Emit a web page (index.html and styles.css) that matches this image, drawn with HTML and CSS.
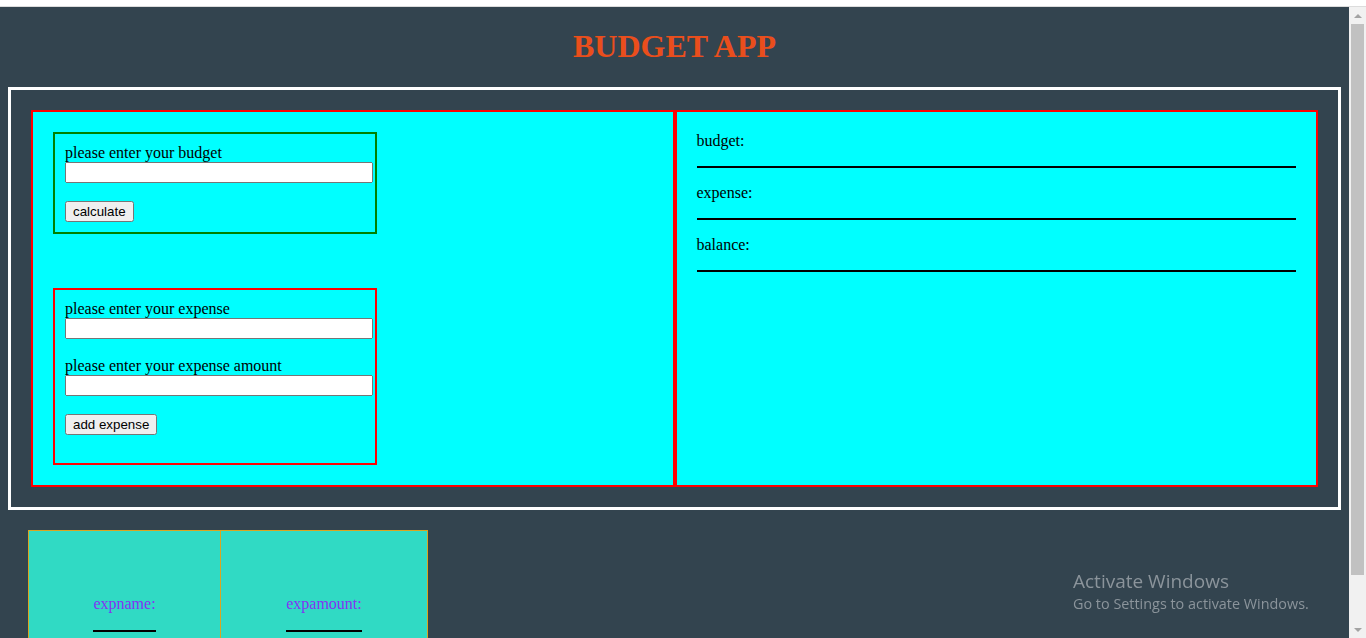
FILE: index.html
```html
<!DOCTYPE html>
<html lang="en">
<head>
<meta charset="utf-8">
<title>Budget App</title>
<link rel="stylesheet" href="styles.css">
</head>
<body>
<div class="topbar"></div>
<div class="window">
  <main class="page">
    <h1 class="title">BUDGET APP</h1>
    <section class="frame">
      <div class="panels">
        <div class="panel panel-forms">
          <form class="form form-budget">
            <label class="field-label">please enter your budget</label>
            <input class="field-input" type="text">
            <button type="button" class="btn">calculate</button>
          </form>
          <form class="form form-expense">
            <label class="field-label">please enter your expense</label>
            <input class="field-input" type="text">
            <label class="field-label">please enter your expense amount</label>
            <input class="field-input" type="text">
            <button type="button" class="btn">add expense</button>
          </form>
        </div>
        <div class="panel panel-summary">
          <div class="summary-item">budget:</div>
          <div class="summary-item">expense:</div>
          <div class="summary-item">balance:</div>
        </div>
      </div>
    </section>
    <section class="list">
      <div class="list-cell cell-name"><span class="list-head">expname:</span></div>
      <div class="list-cell cell-amount"><span class="list-head">expamount:</span></div>
    </section>
  </main>
  <div class="scrollbar">
    <div class="sb-arrow sb-up"><span class="tri-up"></span></div>
    <div class="sb-thumb"></div>
    <div class="sb-track"></div>
    <div class="sb-arrow sb-down"><span class="tri-down"></span></div>
  </div>
</div>
<div class="watermark">
  <div class="wm-title">Activate Windows</div>
  <div class="wm-sub">Go to Settings to activate Windows.</div>
</div>
</body>
</html>
```
FILE: styles.css
```css
html, body {
  margin: 0;
  padding: 0;
  height: 638px;
  overflow: hidden;
  background: #ffffff;
}
body {
  font-family: "Liberation Serif", "Times New Roman", serif;
  font-size: 16px;
  color: #000;
}
.topbar {
  height: 6px;
  background: #ffffff;
  border-bottom: 1px solid #dcdcdc;
}
.window {
  display: flex;
  height: 631px;
  overflow: hidden;
}
.page {
  flex: 1 1 auto;
  min-width: 0;
  background: #33444f;
  padding: 0 8px;
  overflow: hidden;
  display: flow-root;
}
.title {
  margin: 21.44px 0;
  font-size: 32px;
  font-weight: bold;
  text-align: center;
  color: #ea4e1c;
}
.frame {
  border: 3px solid #ffffff;
  padding: 20px;
}
.panels {
  display: flex;
}
.panel {
  flex: 1 1 0;
  border: 2px solid #ff0000;
  background: #00ffff;
  padding: 20px;
}
.form {
  width: 300px;
  padding: 10px;
  margin: 0;
}
.form-budget {
  border: 2px solid #008000;
}
.form-expense {
  border: 2px solid #ff0000;
  margin-top: 54px;
  padding-bottom: 28px;
}
.field-label {
  display: block;
  line-height: 18px;
}
.field-input {
  display: block;
  width: 300px;
  margin: 0 0 18px 0;
}
.btn {
  display: block;
}
.summary-item {
  line-height: 18px;
  padding-bottom: 16px;
  border-bottom: 2px solid #000;
  margin-bottom: 16px;
}
.list {
  display: flex;
  width: 398px;
  margin: 20px 20px 0;
  border: 1px solid #daa520;
  background: #30dac4;
}
.list-cell {
  text-align: center;
  padding: 64px 0 30px;
}
.cell-name {
  width: 191px;
  border-right: 1px solid #daa520;
}
.cell-amount {
  flex: 1;
}
.list-head {
  display: inline-block;
  line-height: 18px;
  color: #8433f2;
  padding-bottom: 17px;
  border-bottom: 2px solid #000;
}
.scrollbar {
  width: 17px;
  flex: 0 0 17px;
  background: #f1f1f1;
  display: flex;
  flex-direction: column;
}
.sb-arrow {
  height: 17px;
  display: flex;
  align-items: center;
  justify-content: center;
}
.tri-up {
  width: 0;
  height: 0;
  border-left: 4px solid transparent;
  border-right: 4px solid transparent;
  border-bottom: 4px solid #a3a3a3;
}
.tri-down {
  width: 0;
  height: 0;
  border-left: 4px solid transparent;
  border-right: 4px solid transparent;
  border-top: 4px solid #a3a3a3;
}
.sb-thumb {
  height: 551px;
  margin: 0 2px;
  background: #c1c1c1;
}
.sb-track {
  flex: 1;
}
.watermark {
  position: fixed;
  left: 1073px;
  top: 569px;
  color: #8b949b;
  font-family: "Open Sans", "Noto Sans", sans-serif;
}
.wm-title {
  font-size: 19px;
  line-height: 25px;
}
.wm-sub {
  font-size: 14.4px;
  line-height: 20px;
}
```
